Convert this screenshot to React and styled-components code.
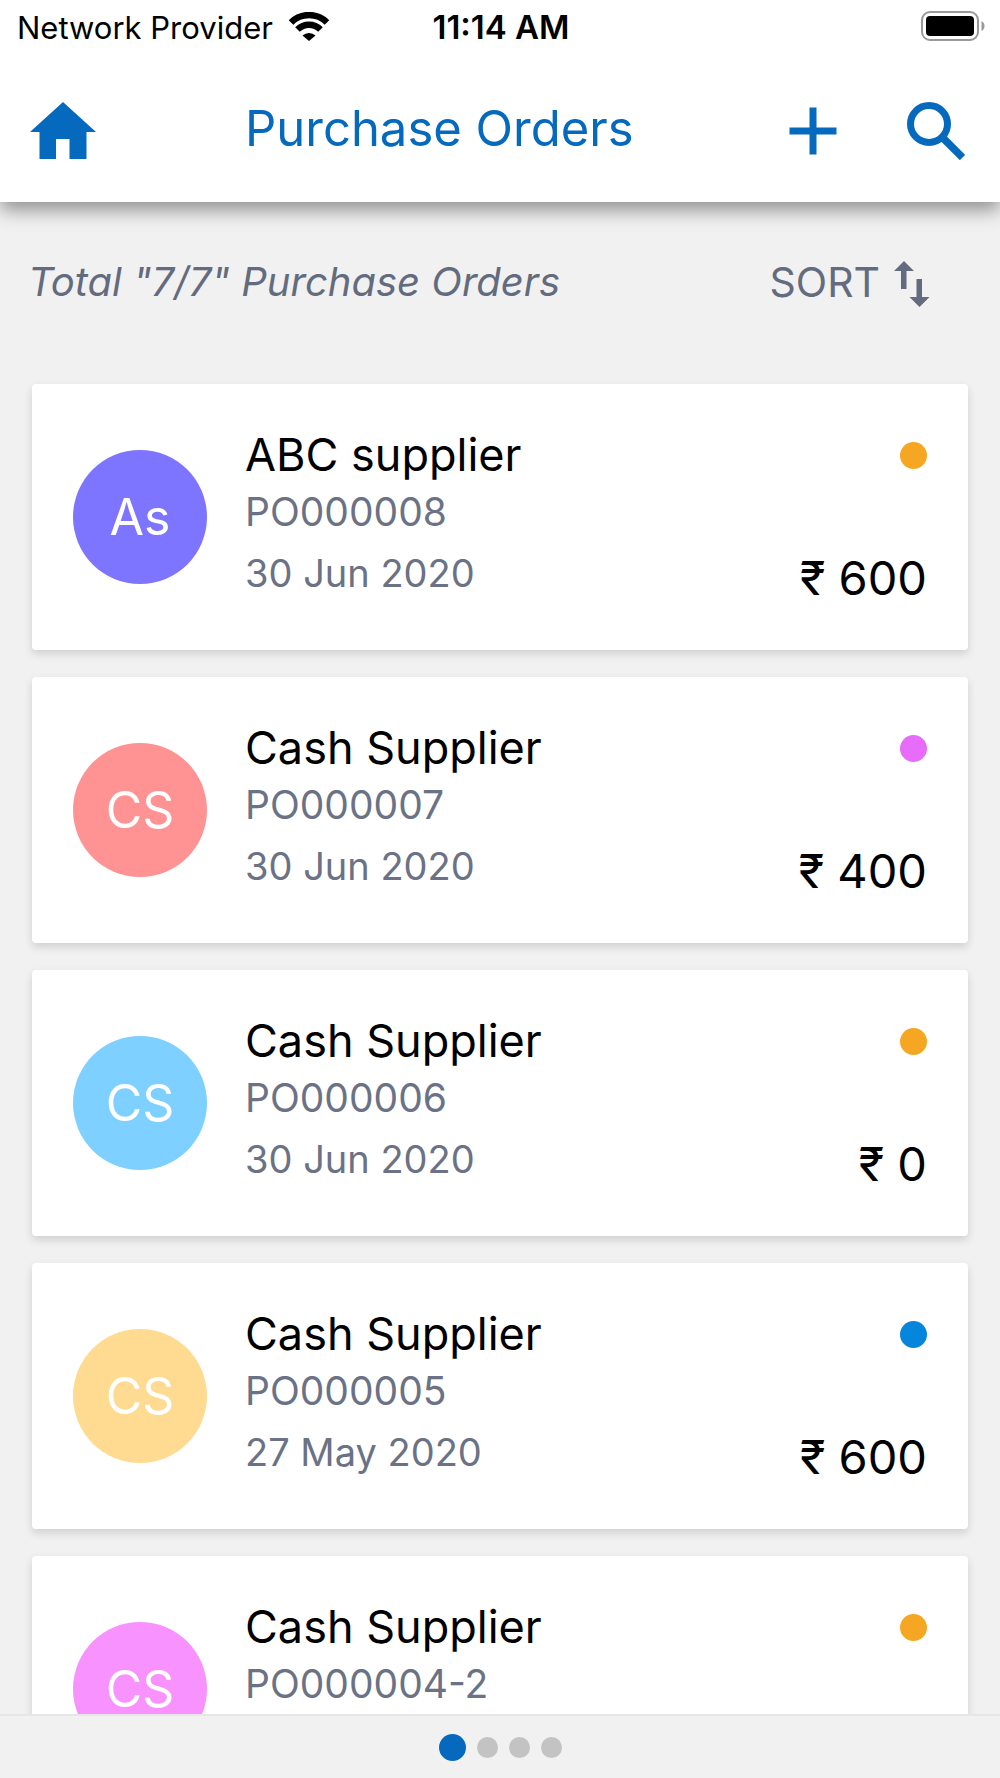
import styled, { createGlobalStyle } from "styled-components";

const orders = [
  { id: "PO000008", supplier: "ABC supplier", initials: "As", date: "30 Jun 2020", amount: "600", color: "#7d75ff", status: "#f5a623" },
  { id: "PO000007", supplier: "Cash Supplier", initials: "CS", date: "30 Jun 2020", amount: "400", color: "#ff9292", status: "#e76cfb" },
  { id: "PO000006", supplier: "Cash Supplier", initials: "CS", date: "30 Jun 2020", amount: "0", color: "#7dd0ff", status: "#f5a623" },
  { id: "PO000005", supplier: "Cash Supplier", initials: "CS", date: "27 May 2020", amount: "600", color: "#ffdb92", status: "#0585db" },
  { id: "PO000004-2", supplier: "Cash Supplier", initials: "CS", date: "27 May 2020", amount: "600", color: "#f792ff", status: "#f5a623" },
];

function WifiIcon() {
  return (
    <svg width="40" height="30" viewBox="0 0 40 30" aria-hidden="true">
      <g fill="none" stroke="#000">
        <path d="M2 10.500a25.500 25.500 0 0 1 36 0" strokeWidth="6.500" />
        <path d="M8.500 17.500a16.300 16.300 0 0 1 23 0" strokeWidth="6.500" />
      </g>
      <path d="M20 29l-6.500-5.500a9.500 9.500 0 0 1 13 0z" />
    </svg>
  );
}

function BatteryIcon() {
  return (
    <svg width="64" height="32" viewBox="0 0 64 32" aria-hidden="true">
      <rect x="1" y="1" width="56" height="28" rx="8" fill="none" stroke="#999" strokeWidth="2" />
      <rect x="5" y="5" width="48" height="20" rx="4" />
      <path d="M60.500 10q3 1.500 3 5t-3 5z" fill="#999" />
    </svg>
  );
}

function HomeIcon() {
  return (
    <svg width="66" height="57" viewBox="0 0 66 57" fill="currentColor" aria-hidden="true">
      <path d="M33 0L66 30H56.500V57H39.500V37H26V57H9.500V30H0z" />
    </svg>
  );
}

function PlusIcon() {
  return (
    <svg width="48" height="48" viewBox="0 0 48 48" fill="currentColor" aria-hidden="true">
      <path d="M20.500 0.500h7v20h20v7h-20v20h-7v-20h-20v-7h20z" />
    </svg>
  );
}

function SearchIcon() {
  return (
    <svg width="58" height="58" viewBox="0 0 58 58" fill="none" stroke="currentColor" aria-hidden="true">
      <circle cx="22" cy="22" r="18.500" strokeWidth="7" />
      <path d="M36 36L55.500 55.500" strokeWidth="7.500" />
    </svg>
  );
}

function SortIcon() {
  return (
    <svg width="36" height="46" viewBox="0 0 36 46" fill="currentColor" aria-hidden="true">
      <path d="M10 0l10 10h-7.500v18h-5.500V10H0z" />
      <path d="M22.500 18h5.500v18h7.500L25.500 46 15.500 36h7z" />
    </svg>
  );
}

function OrderCard({ order }) {
  return (
    <Card>
      <Avatar $color={order.color}>{order.initials}</Avatar>
      <Details>
        <Supplier>{order.supplier}</Supplier>
        <OrderNumber>{order.id}</OrderNumber>
        <OrderDate>{order.date}</OrderDate>
      </Details>
      <Summary>
        <StatusDot $color={order.status} />
        <Amount>₹ {order.amount}</Amount>
      </Summary>
    </Card>
  );
}

function App() {
  return (
    <Screen>
      <GlobalStyle />
      <Header>
        <StatusBar>
          <Carrier>
            Network Provider
            <WifiIcon />
          </Carrier>
          <Clock>11:14 AM</Clock>
          <Battery>
            <BatteryIcon />
          </Battery>
        </StatusBar>
        <NavBar>
          <IconButton type="button" aria-label="Home">
            <HomeIcon />
          </IconButton>
          <Title>Purchase Orders</Title>
          <Actions>
            <IconButton type="button" aria-label="Add purchase order">
              <PlusIcon />
            </IconButton>
            <IconButton type="button" aria-label="Search">
              <SearchIcon />
            </IconButton>
          </Actions>
        </NavBar>
      </Header>
      <Content>
        <ListHeader>
          <Total>Total "7/7" Purchase Orders</Total>
          <SortButton type="button">
            SORT
            <SortIcon />
          </SortButton>
        </ListHeader>
        <List>
          {orders.map((order) => (
            <OrderCard key={order.id} order={order} />
          ))}
        </List>
      </Content>
      <Pager>
        {[1, 2, 3, 4].map((page) => (
          <PageDot key={page} type="button" aria-label={`Page ${page}`} $active={page === 1} />
        ))}
      </Pager>
    </Screen>
  );
}

export default App;

const GlobalStyle = createGlobalStyle`
  * {
    box-sizing: border-box;
  }
  body {
    margin: 0;
    background-color: #f1f1f1;
    font-family: Inter, "Liberation Sans", sans-serif;
  }
  button {
    padding: 0;
    border: 0;
    background: none;
    font: inherit;
    cursor: pointer;
  }
  svg {
    display: block;
    flex-shrink: 0;
  }
`;

const Screen = styled.div`
  display: flex;
  flex-direction: column;
  height: 100vh;
`;
//
const Header = styled.header`
  position: relative;
  z-index: 1;
  background-color: white;
  box-shadow: 0 8px 18px rgba(0, 0, 0, 0.4);
`;

const StatusBar = styled.div`
  display: grid;
  grid-template-columns: 1fr auto 1fr;
  align-items: center;
  height: 54px;
  padding: 0 15px 0 17px;
  font-size: 31px;
`;

const Carrier = styled.div`
  display: flex;
  align-items: center;
  gap: 16px;
  white-space: nowrap;
`;

const Clock = styled.div`
  font-size: 33px;
  font-weight: 600;
`;

const Battery = styled.div`
  justify-self: end;
`;
//
const NavBar = styled.div`
  display: flex;
  align-items: center;
  height: 148px;
  padding: 5px 35px 0 30px;
`;

const IconButton = styled.button`
  color: #0569be;
`;

const Title = styled.h1`
  flex: 1;
  margin: 0 0 0 149px;
  padding-bottom: 3px;
  color: #0569be;
  font-size: 49px;
  font-weight: 400;
  line-height: 60px;
`;

const Actions = styled.div`
  display: flex;
  align-items: center;
  gap: 70px;
`;
//
const Content = styled.main`
  flex: 1;
  min-height: 0;
  overflow-y: auto;
  scrollbar-width: none;
`;

const ListHeader = styled.div`
  display: flex;
  align-items: center;
  justify-content: space-between;
  height: 182px;
  padding: 0 70px 22px 28px;
  color: #636b7e;
  font-size: 40px;
  line-height: 50px;
`;

const Total = styled.p`
  margin: 0;
  font-style: italic;
`;

const SortButton = styled.button`
  display: flex;
  align-items: flex-end;
  gap: 14px;
  color: #636b7e;
  font-size: 41px;
`;
//
const List = styled.ul`
  display: flex;
  flex-direction: column;
  gap: 27px;
  margin: 0;
  padding: 0 32px 27px;
  list-style: none;
`;

const Card = styled.li`
  display: flex;
  align-items: center;
  padding: 44px 41px;
  border-radius: 4px;
  background-color: white;
  box-shadow: 0 4px 8px rgba(0, 0, 0, 0.14);
`;

const Avatar = styled.div`
  display: flex;
  align-items: center;
  justify-content: center;
  width: 134px;
  height: 134px;
  border-radius: 50%;
  background-color: ${(props) => props.$color};
  color: white;
  font-size: 50px;
`;

const Details = styled.div`
  flex: 1;
  margin-left: 38px;
`;

const Supplier = styled.h2`
  margin: 0 0 2px;
  font-size: 45px;
  font-weight: 400;
  line-height: 54px;
`;

const OrderNumber = styled.p`
  margin: 0;
  color: #6b7285;
  font-size: 39px;
  line-height: 56px;
`;

const OrderDate = styled(OrderNumber)`
  font-size: 38px;
  line-height: 66px;
`;

const Summary = styled.div`
  display: flex;
  flex-direction: column;
  align-items: flex-end;
  justify-content: space-between;
  align-self: stretch;
  padding-top: 14px;
`;

const StatusDot = styled.span`
  width: 27px;
  height: 27px;
  border-radius: 50%;
  background-color: ${(props) => props.$color};
`;

const Amount = styled.span`
  font-size: 47px;
  line-height: 56px;
`;
//
const Pager = styled.nav`
  display: flex;
  align-items: center;
  justify-content: center;
  gap: 11px;
  height: 64px;
  border-top: 2px solid #e6e6e6;
  background-color: #f1f1f1;
`;

const PageDot = styled.button`
  width: ${(props) => (props.$active ? 27 : 21)}px;
  height: ${(props) => (props.$active ? 27 : 21)}px;
  border-radius: 50%;
  background-color: ${(props) => (props.$active ? "#0569be" : "#c3c3c3")};
`;
